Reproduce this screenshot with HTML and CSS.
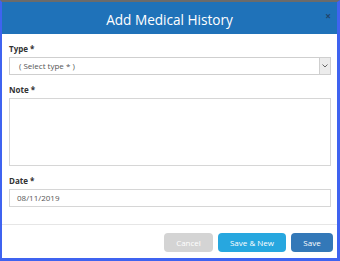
FILE: index.html
```html
<!DOCTYPE html>
<html>
<head>
<meta charset="utf-8">
<link rel="stylesheet" href="styles.css">
</head>
<body>
<div class="dialog">
  <div class="header">
    <h1 class="title">Add Medical History</h1>
    <span class="close">&times;</span>
  </div>
  <div class="form">
    <div class="field">
      <label class="label">Type *</label>
      <div class="select">
        <span class="select-text">( Select type * )</span>
        <span class="select-btn">
          <svg width="6" height="4" viewBox="0 0 6 4"><path d="M0.5 0.5 L3 3 L5.5 0.5" fill="none" stroke="#666" stroke-width="1"/></svg>
        </span>
      </div>
    </div>
    <div class="field">
      <label class="label">Note *</label>
      <div class="textarea"></div>
    </div>
    <div class="field">
      <label class="label">Date *</label>
      <div class="input">08/11/2019</div>
    </div>
  </div>
  <div class="footer">
    <button class="btn btn-cancel">Cancel</button>
    <button class="btn btn-new">Save &amp; New</button>
    <button class="btn btn-save">Save</button>
  </div>
</div>
</body>
</html>
```
FILE: styles.css
```css
html, body {
  margin: 0;
  padding: 0;
  background: #ffffff;
}
.dialog {
  box-sizing: border-box;
  width: 340px;
  height: 261px;
  border-top: 2px solid #6b6b6b;
  border-left: 2px solid #3f63f0;
  border-right: 3px solid #3f63f0;
  border-bottom: 3px solid #3f63f0;
  font-family: "Open Sans", sans-serif;
  display: flex;
  flex-direction: column;
  background: #fff;
}
.header {
  position: relative;
  height: 32px;
  background: #1f72b9;
  display: flex;
  align-items: center;
  justify-content: center;
}
.title {
  margin: 2px 0 0 0;
  font-size: 13.6px;
  font-weight: 400;
  color: #ffffff;
}
.close {
  position: absolute;
  top: 9px;
  right: 6px;
  font-size: 10px;
  line-height: 10px;
  color: #21456b;
  font-weight: 700;
}
.form {
  padding: 9px 6px 17px 7px;
  display: flex;
  flex-direction: column;
  gap: 9px;
}
.field {
  display: flex;
  flex-direction: column;
}
.label {
  font-size: 8px;
  line-height: 12px;
  font-weight: 700;
  color: #333;
  margin-bottom: 2px;
}
.select {
  box-sizing: border-box;
  height: 18px;
  border: 1px solid #cfcfcf;
  display: flex;
  align-items: stretch;
}
.select-text {
  flex: 1;
  font-size: 8px;
  line-height: 16px;
  color: #555;
  padding-left: 9px;
}
.select-btn {
  width: 10px;
  background: #ececec;
  border-left: 1px solid #cfcfcf;
  display: flex;
  align-items: center;
  justify-content: center;
}
.textarea {
  box-sizing: border-box;
  height: 68px;
  border: 1px solid #d6d6d6;
}
.input {
  box-sizing: border-box;
  height: 18px;
  border: 1px solid #d6d6d6;
  font-size: 8px;
  line-height: 16px;
  color: #555;
  padding-left: 7px;
}
.footer {
  border-top: 1px solid #e6e6e6;
  padding: 8px 4px 0 0;
  display: flex;
  justify-content: flex-end;
  gap: 5px;
}
.btn {
  box-sizing: border-box;
  height: 19px;
  border: none;
  border-radius: 4px;
  font-family: "Open Sans", sans-serif;
  font-size: 8px;
  color: #fff;
  padding: 0;
}
.btn-cancel {
  width: 49px;
  background: #d4d4d4;
}
.btn-new {
  width: 68px;
  background: #27a7df;
}
.btn-save {
  width: 42px;
  background: #3378b8;
}
```
